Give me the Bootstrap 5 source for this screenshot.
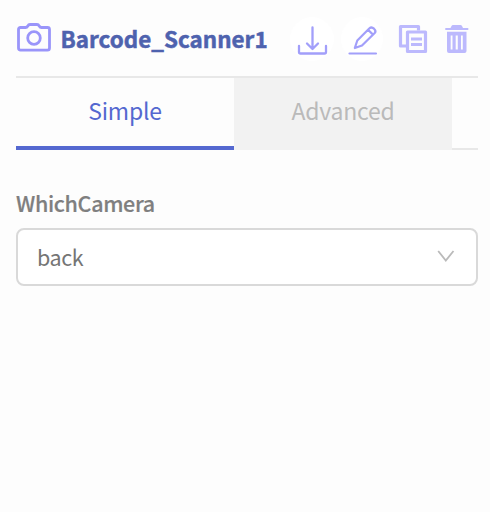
<!DOCTYPE html>
<html lang="en">
<head>
<meta charset="utf-8">
<meta name="viewport" content="width=device-width, initial-scale=1">
<title>Barcode_Scanner1</title>
<link href="https://cdn.jsdelivr.net/npm/bootstrap@5.3.0/dist/css/bootstrap.min.css" rel="stylesheet">
<style>
body{background:#fdfdfd;font-family:"Noto Sans CJK SC","Noto Sans",sans-serif;font-size:22px;line-height:30px}
.inspector{padding:0 12px 0 16px}
.inspector-head{height:78px;border-bottom:2px solid #e8e8e8}
.inspector-head svg{display:block;flex:none}
.camera-icon{margin-top:21px}
.component-name{font-size:22.4px;font-weight:700;-webkit-text-stroke:.5px #4e62ae;color:#4e62ae;letter-spacing:.03px;margin:23px 0 0 8.5px;line-height:30px}
.tool{border:0;background:none;padding:0}
.tool-round{background:#fff;border-radius:50%}
.tool-rename{margin-left:7px}
.tool-copy{margin-left:9px}
.tools{margin:17px 0 0 auto}
.prop-tabs{height:72px}
.prop-tabs .nav-link{width:218px;height:72px;border:0;border-bottom:4px solid #f2f2f2;border-radius:0;padding:0 0 5px;font-size:23px;letter-spacing:-.25px;line-height:30px;color:#bababa;background:#f2f2f2}
.prop-tabs .nav-link.active{color:#5468d0;background:transparent;border-bottom-color:#5468d0}
.tab-rest{border-bottom:2px solid #e8e8e8}
.prop-label{margin:38px 0 10px;font-size:21.5px;letter-spacing:-.33px;line-height:30px;font-weight:500;-webkit-text-stroke:.2px #7f7f7f;color:#7f7f7f;display:block}
.prop-select{height:58px;border:2px solid #d9d9d9;border-radius:8px;background:#fff;color:#757575;padding:0 21px 0 19px}
.select-value{font-size:21.5px;letter-spacing:-.4px}
.select-arrow{margin-bottom:2px}
</style>
</head>
<body>
<main class="inspector">
  <header class="inspector-head d-flex align-items-start">
    <svg class="camera-icon" width="36" height="34" viewBox="0 0 36 34" fill="none" stroke="#9a95fa" stroke-width="2.800" stroke-linejoin="round"><path d="M4.500 6.500H9.500Q11 6.500 11.800 5Q12.500 3.500 14 3.500H21Q22.500 3.500 23.200 5Q24 6.500 25.500 6.500H31.500Q33.500 6.500 33.500 8.500V27Q33.500 29.200 31.500 29.200H4.500Q2.500 29.200 2.500 27V8.500Q2.500 6.500 4.500 6.500Z"/><circle cx="18" cy="17" r="6.300"/></svg>
    <h1 class="component-name">Barcode_Scanner1</h1>
    <div class="tools d-flex">
      <button class="tool tool-round" aria-label="Download"><svg width="44" height="44" viewBox="0 0 44 44" fill="none" stroke="#a29ffa" stroke-width="2.300" stroke-linecap="round" stroke-linejoin="round"><path d="M22.500 10.500V31.500M17 26.500L22.500 32L28 26.500M9 29V35Q9 36.500 10.500 36.500H34.500Q36 36.500 36 35V29"/></svg></button>
      <button class="tool tool-round tool-rename" aria-label="Rename"><svg width="42" height="44" viewBox="0 0 42 44" fill="none" stroke="#a29ffa" stroke-width="2.200" stroke-linecap="round" stroke-linejoin="round"><path d="M13.800 31L16.300 23.500L28.500 11.300Q30.500 9.500 33 11.700Q35.500 14 33.700 16L21 28.500ZM27 12.800L32 17.600M8.500 36.500H35"/></svg></button>
      <button class="tool tool-copy" aria-label="Copy"><svg width="44" height="44" viewBox="0 0 44 44" fill="none" stroke="#bcb9fd" stroke-width="3.200" stroke-linejoin="round"><path d="M14.500 29H8.500V9.500H26.500V13.500"/><path d="M15.500 15H33.500V34.500H15.500Z"/><path d="M19 22H30M19 27.500H30"/></svg></button>
      <button class="tool ms-1" aria-label="Delete"><svg width="38" height="44" viewBox="0 0 38 44" fill="none"><path fill="#bcb9fd" fill-rule="evenodd" d="M10.500 11L11.500 9Q12 8 13 8H20.500Q21.500 8 22 9L23 11H28.300V13H5.300V11ZM7 14.700H26.500V34Q26.500 36 24.500 36H9Q7 36 7 34ZM10.700 18.500V32.500H12.500V18.500ZM15.700 18.500V32.500H17.800V18.500ZM21 18.500V32.500H22.800V18.500Z"/></svg></button>
    </div>
  </header>
  <div class="nav prop-tabs flex-nowrap" role="tablist">
    <button class="nav-link active" role="tab">Simple</button>
    <button class="nav-link" role="tab">Advanced</button>
    <div class="tab-rest flex-grow-1"></div>
  </div>
  <span class="prop-label">WhichCamera</span>
  <div class="prop-select d-flex align-items-center justify-content-between" role="combobox" aria-label="WhichCamera" aria-expanded="false" tabindex="0">
    <span class="select-value">back</span>
    <svg class="select-arrow" width="18" height="14" viewBox="0 0 18 14" fill="none" stroke="#bababa" stroke-width="1.800"><path d="M1.200 2L8.800 11.500L16.500 2"/></svg>
  </div>
</main>
<script src="https://cdn.jsdelivr.net/npm/bootstrap@5.3.0/dist/js/bootstrap.bundle.min.js"></script>
</body>
</html>
